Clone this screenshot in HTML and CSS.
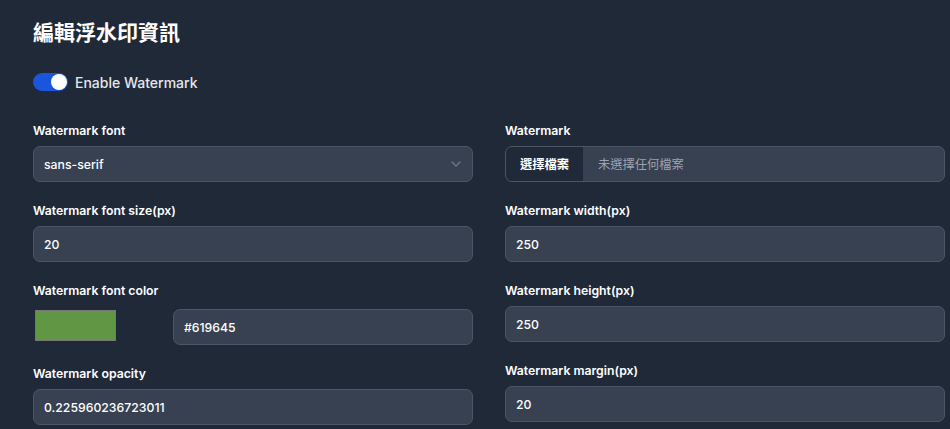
FILE: index.html
```html
<!DOCTYPE html>
<html lang="zh-Hant">
<head>
<meta charset="utf-8">
<title>編輯浮水印資訊</title>
<link rel="stylesheet" href="styles.css">
</head>
<body>
<div class="page">
  <h1 class="title">編輯浮水印資訊</h1>
  <label class="toggle-row">
    <span class="toggle"><span class="knob"></span></span>
    <span class="toggle-text">Enable Watermark</span>
  </label>
  <div class="grid">
    <div class="col">
      <div class="field">
        <div class="label">Watermark font</div>
        <div class="input select">
          <span>sans-serif</span>
          <svg class="chev" width="10" height="6" viewBox="0 0 10 6"><path d="M1 1l4 4 4-4" fill="none" stroke="#6b7280" stroke-width="1.5" stroke-linecap="round" stroke-linejoin="round"/></svg>
        </div>
      </div>
      <div class="field">
        <div class="label">Watermark font size(px)</div>
        <div class="input">20</div>
      </div>
      <div class="field">
        <div class="label">Watermark font color</div>
        <div class="color-row">
          <div class="swatch-cell"><span class="swatch"></span></div>
          <div class="input grow">#619645</div>
        </div>
      </div>
      <div class="field">
        <div class="label">Watermark opacity</div>
        <div class="input">0.225960236723011</div>
      </div>
    </div>
    <div class="col">
      <div class="field">
        <div class="label">Watermark</div>
        <div class="input file">
          <span class="file-btn">選擇檔案</span>
          <span class="file-name">未選擇任何檔案</span>
        </div>
      </div>
      <div class="field">
        <div class="label">Watermark width(px)</div>
        <div class="input">250</div>
      </div>
      <div class="field">
        <div class="label">Watermark height(px)</div>
        <div class="input">250</div>
      </div>
      <div class="field">
        <div class="label">Watermark margin(px)</div>
        <div class="input">20</div>
      </div>
    </div>
  </div>
</div>
</body>
</html>
```

FILE: styles.css
```css
html, body {
  margin: 0;
  padding: 0;
  background: #1f2937;
}
body {
  font-family: Inter, "Noto Sans", "Noto Sans CJK TC", sans-serif;
  color: #ffffff;
}
.page {
  padding: 17px 0 0 33px;
  width: 912px;
}
.title {
  margin: 0;
  font-size: 21px;
  line-height: 28px;
  font-weight: 700;
  font-family: "Noto Sans CJK TC", sans-serif;
  color: #ffffff;
}
.toggle-row {
  display: flex;
  align-items: center;
  margin-top: 28px;
  height: 18px;
}
.toggle {
  position: relative;
  width: 35px;
  height: 18px;
  border-radius: 9px;
  background: #1a56db;
  flex: none;
}
.knob {
  position: absolute;
  top: 1px;
  right: 1px;
  width: 16px;
  height: 16px;
  border-radius: 50%;
  background: #ffffff;
}
.toggle-text {
  margin-left: 7px;
  font-size: 14px;
  font-weight: 500;
  color: #e5e7eb;
}
.grid {
  display: grid;
  grid-template-columns: 440px 440px;
  column-gap: 32px;
  margin-top: 31px;
  align-items: start;
}
.col {
  display: flex;
  flex-direction: column;
  gap: 20px;
}
.label {
  font-size: 12.25px;
  line-height: 18px;
  font-weight: 600;
  margin-bottom: 6px;
  color: #ffffff;
}
.input {
  box-sizing: border-box;
  height: 36px;
  display: flex;
  align-items: center;
  padding: 0 10px;
  background: #374151;
  border: 1px solid #4b5563;
  border-radius: 7px;
  font-size: 12.25px;
  font-weight: 500;
  color: #ffffff;
}
.select {
  justify-content: space-between;
}
.chev {
  margin-right: 1px;
}
.color-row {
  display: flex;
  align-items: flex-end;
  height: 39px;
}
.swatch-cell {
  width: 140px;
  flex: none;
  padding-bottom: 4px;
}
.swatch {
  display: block;
  box-sizing: border-box;
  margin-left: 2px;
  width: 81px;
  height: 31px;
  background: #619645;
  border: 1px solid #767676;
}
.grow {
  flex: 1;
}
.file {
  padding: 0;
  overflow: hidden;
  font-family: "Noto Sans CJK TC", sans-serif;
}
.file-btn {
  display: flex;
  align-items: center;
  height: 100%;
  padding: 0 14px;
  background: #1f2937;
  font-weight: 700;
  color: #ffffff;
  font-size: 12.25px;
}
.file-name {
  margin-left: 15px;
  color: #9ca3af;
  font-size: 12.25px;
  font-weight: 400;
}
```
